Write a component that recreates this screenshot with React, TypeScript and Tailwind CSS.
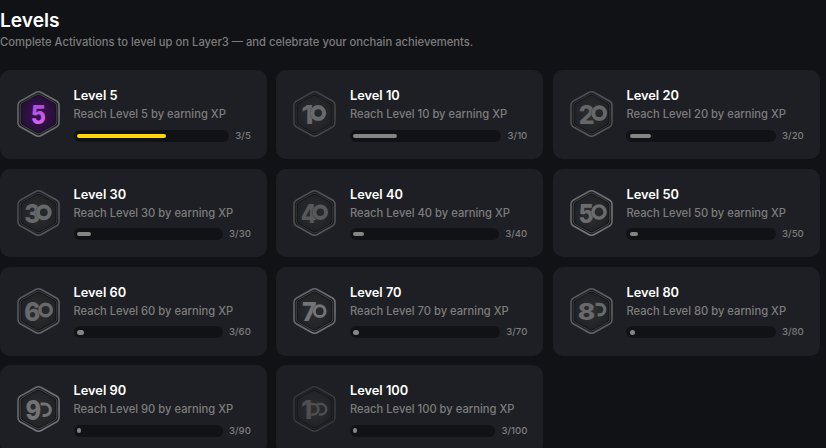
type Art = {
  digit: string;
  x: number;
  width: number;
  baseline?: number;
  size?: number;
  ring?: [number, number, number];
  arcs?: [number, number, number][];
  stroke?: number;
  tone: string;
  rim: string;
};

const levels: { level: number; art: Art }[] = [
  { level: 5, art: { digit: '5', x: 13.8, width: 15.2, tone: '#c35bea', rim: '#77787b' } },
  { level: 10, art: { digit: '1', x: 8.4, width: 12, ring: [25.2, 22.1, 5.9], stroke: 4.2, tone: '#68696b', rim: '#47484b' } },
  { level: 20, art: { digit: '2', x: 8.8, width: 15.8, ring: [29.2, 22.2, 5.9], stroke: 4, tone: '#666769', rim: '#58595c' } },
  { level: 30, art: { digit: '3', x: 7.2, width: 16, ring: [26.8, 22.3, 5.9], stroke: 4, tone: '#67686a', rim: '#58595c' } },
  { level: 40, art: { digit: '4', x: 7.8, width: 16, ring: [27.3, 22.2, 5.8], stroke: 4, tone: '#57585a', rim: '#58595c' } },
  { level: 50, art: { digit: '5', x: 8.6, width: 15.2, ring: [29, 22, 6.1], stroke: 3.4, tone: '#6b6c6e', rim: '#7b7c7f' } },
  { level: 60, art: { digit: '6', x: 7.2, width: 16, ring: [28.6, 22, 5.7], stroke: 3.4, tone: '#68696b', rim: '#66676a' } },
  { level: 70, art: { digit: '7', x: 9, width: 14.6, ring: [26.7, 23.2, 5.4], stroke: 3, tone: '#737476', rim: '#77787b' } },
  { level: 80, art: { digit: '8', x: 7.8, width: 17.6, baseline: 32.2, size: 22.5, arcs: [[29.6, 21.6, 5.2]], stroke: 3.2, tone: '#68696b', rim: '#66676a' } },
  { level: 90, art: { digit: '9', x: 8.4, width: 15.6, baseline: 33.8, size: 27, arcs: [[27.6, 23.8, 5.8]], stroke: 3, tone: '#727375', rim: '#7b7c7f' } },
  { level: 100, art: { digit: '1', x: 8.2, width: 11, arcs: [[20.2, 23.2, 5.2], [28, 23.2, 5.2]], stroke: 2.5, tone: '#4e4f51', rim: '#3a3b3e' } },
];

const HEX =
  'M18.8 1.5 Q21.5 0 24.2 1.5 L39.4 10 Q42 11.5 42 14.5 V31.5 Q42 34.5 39.4 36 L24.2 44.5 Q21.5 46 18.8 44.5 L3.6 36 Q1 34.5 1 31.5 V14.5 Q1 11.5 3.6 10 Z';

function Badge({ level, art }: { level: number; art: Art }) {
  const lit = level === 5;
  const baseline = art.baseline ?? 33.3;
  const size = art.size ?? 26;
  return (
    <svg viewBox="0 0 43 46" className="mt-[21px] h-[46px] w-[43px] shrink-0 self-start" aria-label={`Level ${level} badge`}>
      <defs>
        <linearGradient id={`rim${level}`} x1="0" y1="0" x2="1" y2="1">
          <stop offset="0" stopColor={art.rim} stopOpacity="0.75" />
          <stop offset="0.5" stopColor={art.rim} stopOpacity="0.9" />
          <stop offset="0.75" stopColor={art.rim} />
          <stop offset="1" stopColor={art.rim} stopOpacity="0.65" />
        </linearGradient>
        <linearGradient id={`tone${level}`} x1="0" y1="13" x2="0" y2="34" gradientUnits="userSpaceOnUse">
          <stop offset="0" stopColor={lit ? '#a64bd6' : art.tone} />
          <stop offset="1" stopColor={lit ? '#d966f6' : art.tone} />
        </linearGradient>
        <radialGradient id={`core${level}`}>
          <stop offset="0" stopColor={lit ? '#3c0f54' : '#2b2c2f'} />
          <stop offset="1" stopColor={lit ? '#1f0c2f' : '#1d1e21'} />
        </radialGradient>
        <pattern id={`dots${level}`} width="2.4" height="2.4" patternUnits="userSpaceOnUse">
          <circle cx="1.2" cy="1.2" r="0.55" fill={lit ? '#693087' : '#4b4c4f'} opacity="0.7" />
        </pattern>
      </defs>
      <path d={HEX} fill="#191a1d" stroke={`url(#rim${level})`} strokeWidth="1.5" />
      <g transform="translate(21.5 23) scale(.89) translate(-21.5 -23)">
        <path d={HEX} fill="#141518" stroke={art.rim} strokeOpacity="0.6" strokeWidth="0.9" />
      </g>
      <g transform="translate(21.5 23) scale(.82) translate(-21.5 -23)">
        <path d={HEX} fill={`url(#core${level})`} />
        <path d={HEX} fill={`url(#dots${level})`} />
      </g>
      <text
        x={art.x}
        y={baseline}
        fontFamily="Inter, sans-serif"
        fontSize={size}
        fontWeight="800"
        fill={`url(#tone${level})`}
        textLength={art.width}
        lengthAdjust="spacingAndGlyphs"
      >
        {art.digit}
      </text>
      {art.ring && (
        <>
          <circle
            cx={art.ring[0]}
            cy={art.ring[1]}
            r={art.ring[2]}
            fill="#27282b"
            stroke="#2b2c2f"
            strokeOpacity="0.5"
            strokeWidth={(art.stroke ?? 3) + 0.8}
          />
          <circle cx={art.ring[0]} cy={art.ring[1]} r={art.ring[2]} fill="none" stroke={art.tone} strokeWidth={art.stroke} />
        </>
      )}
      {art.arcs?.map(([x, y, r]) => (
        <path
          key={x}
          d={`M${x - 4} ${y - r} H${x} A${r} ${r} 0 0 1 ${x} ${y + r} H${x - 2}`}
          fill="none"
          stroke={art.tone}
          strokeWidth={art.stroke}
        />
      ))}
    </svg>
  );
}

function LevelCard({ level, art }: { level: number; art: Art }) {
  return (
    <article className="flex h-[88.7px] items-center rounded-[10px] bg-[#1e1f24] pr-4 pl-[17px]">
      <Badge level={level} art={art} />
      <div className="ml-[13.5px] min-w-0 flex-1">
        <h2 className="text-[12.8px] leading-[18px] font-semibold text-white">Level {level}</h2>
        <p className="text-[11.2px] leading-[18px] font-medium text-[#7d7d7d]">Reach Level {level} by earning XP</p>
        <div className="mt-[6.4px] flex h-3 items-center gap-[6.4px]">
          <div className="flex h-3 flex-1 items-center rounded-full bg-[#111216] px-[3.2px]">
            <div
              className={`h-[4.4px] min-w-1 rounded-full ${level === 5 ? 'bg-[#ffd60a]' : 'bg-[#858585]'}`}
              style={{ width: `${(3 / level) * 100}%` }}
            />
          </div>
          <span className="text-[9.6px] leading-3 font-medium text-[#7d7d7d]">3/{level}</span>
        </div>
      </div>
    </article>
  );
}

export default function App() {
  return (
    <main className="h-screen overflow-hidden bg-[#111216] pt-[7px] font-[Inter,sans-serif]">
      <h1 className="text-[19.2px] leading-[26px] font-semibold text-white">Levels</h1>
      <p className="text-[11.22px] leading-[18px] font-medium text-[#7d7d7d]">
        Complete Activations to level up on Layer3 — and celebrate your onchain achievements.
      </p>
      <section className="mt-[19.25px] grid w-[819.8px] grid-cols-3 gap-[9.6px]">
        {levels.map((item) => (
          <LevelCard key={item.level} {...item} />
        ))}
      </section>
    </main>
  );
}
